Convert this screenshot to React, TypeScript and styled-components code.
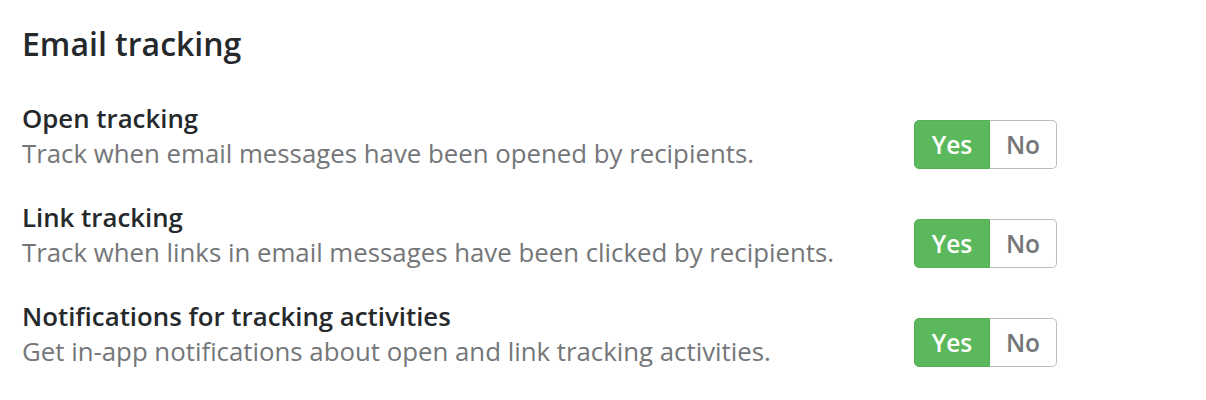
import React from 'react';
import styled, { createGlobalStyle } from 'styled-components';

const GlobalStyle = createGlobalStyle`
    body {
        margin: 0;
        background: #ffffff;
        font-family: 'Open Sans', 'Noto Sans', sans-serif;
    }
`;

const Page = styled.div`
    width: 1035px;
    padding: 24px 0 0 22px;
`;

const Heading = styled.h2`
    margin: 0 0 37px 0;
    font-size: 32px;
    line-height: 40px;
    font-weight: 600;
    color: #26292c;
`;

const Row = styled.div`
    display: flex;
    align-items: flex-end;
    justify-content: space-between;
    margin-bottom: 29px;
`;

const Text = styled.div`
    display: flex;
    flex-direction: column;
`;

const Label = styled.div`
    font-size: 25.8px;
    line-height: 35px;
    font-weight: 600;
    color: #26292c;
`;

const Description = styled.div`
    font-size: 25.8px;
    line-height: 35px;
    color: #747678;
`;

const Toggle = styled.div`
    display: flex;
    height: 49px;
    margin-bottom: 2px;
`;

const Option = styled.button<{ $active?: boolean; $w: number }>`
    width: ${props => props.$w}px;
    box-sizing: border-box;
    margin: 0;
    padding: 0;
    font-family: inherit;
    font-size: 24.5px;
    font-weight: 600;
    color: ${props => (props.$active ? '#ffffff' : '#747678')};
    background: ${props => (props.$active ? '#5cb85c' : '#ffffff')};
    border: 1px solid ${props => (props.$active ? '#55b055' : '#bcbdbe')};
    cursor: pointer;

    &:first-child {
        border-radius: 5px 0 0 5px;
    }

    &:last-child {
        border-left: none;
        border-radius: 0 5px 5px 0;
    }
`;

const settings = [
    { title: 'Open tracking', text: 'Track when email messages have been opened by recipients.' },
    { title: 'Link tracking', text: 'Track when links in email messages have been clicked by recipients.' },
    { title: 'Notifications for tracking activities', text: 'Get in-app notifications about open and link tracking activities.' },
];

const App = () => {
    return (
        <>
            <GlobalStyle />
            <Page>
                <Heading>Email tracking</Heading>
                {settings.map((s, i) => (
                    <Row key={i}>
                        <Text>
                            <Label>{s.title}</Label>
                            <Description>{s.text}</Description>
                        </Text>
                        <Toggle>
                            <Option $active $w={76}>Yes</Option>
                            <Option $w={67}>No</Option>
                        </Toggle>
                    </Row>
                ))}
            </Page>
        </>
    );
};

export default App;
